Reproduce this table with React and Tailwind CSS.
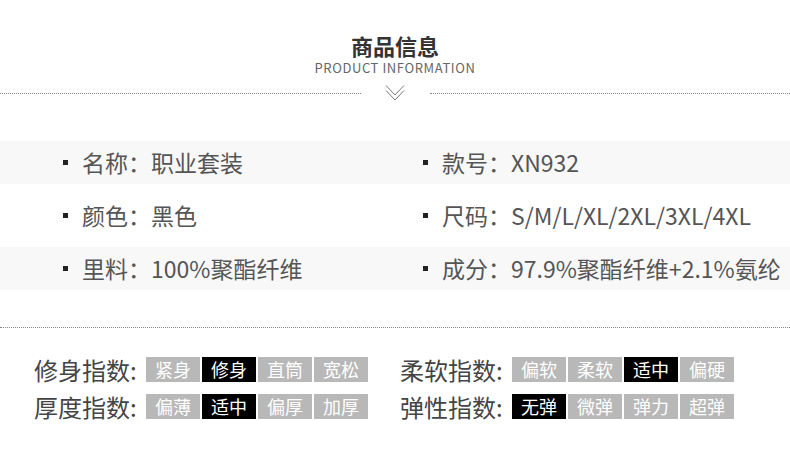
import React from 'react';

const info = [
  { left: ['名称', '职业套装'], right: ['款号', 'XN932'], shaded: true },
  { left: ['颜色', '黑色'], right: ['尺码', 'S/M/L/XL/2XL/3XL/4XL'], shaded: false },
  { left: ['里料', '100%聚酯纤维'], right: ['成分', '97.9%聚酯纤维+2.1%氨纶'], shaded: true },
];

const indexes = [
  [
    { label: '修身指数', options: ['紧身', '修身', '直筒', '宽松'], active: 1 },
    { label: '柔软指数', options: ['偏软', '柔软', '适中', '偏硬'], active: 2 },
  ],
  [
    { label: '厚度指数', options: ['偏薄', '适中', '偏厚', '加厚'], active: 1 },
    { label: '弹性指数', options: ['无弹', '微弹', '弹力', '超弹'], active: 0 },
  ],
];

function Item({ pair }) {
  return (
    <div className="flex items-center">
      <span className="w-[5px] h-[5px] bg-[#222] mr-[14px]" />
      <span>{pair[0]}：{pair[1]}</span>
    </div>
  );
}

function IndexGroup({ group }) {
  return (
    <div className="flex items-center">
      <div className="w-[112px] text-[24px] leading-[25px] text-[#444]">{group.label}:</div>
      <div className="flex gap-[2px]">
        {group.options.map((o, i) => (
          <div
            key={o}
            className={`w-[54px] h-[25px] flex items-center justify-center text-[18px] leading-[25px] text-white ${i === group.active ? 'bg-black' : 'bg-[#b8b8b8]'}`}
          >
            {o}
          </div>
        ))}
      </div>
    </div>
  );
}

export default function App() {
  return (
    <div className="w-[790px] h-[450px] bg-white overflow-hidden font-['Noto_Sans_CJK_SC','Noto_Sans',sans-serif]">
      <div className="pt-[33px] text-center">
        <h1 className="text-[22px] leading-[24px] font-bold text-[#333]">商品信息</h1>
        <p className="mt-[3px] text-[13px] leading-[16px] text-[#666] tracking-[0.6px]">PRODUCT INFORMATION</p>
      </div>

      <div className="mt-[9px] flex items-center h-[16px]">
        <div className="flex-1 border-t border-dotted border-[#888]" />
        <div className="w-[69px] flex justify-center">
          <svg width="20" height="16" viewBox="0 0 20 16" fill="none" stroke="#777" strokeWidth="1">
            <path d="M1 0.5 L10 10 L19 0.5" />
            <path d="M1 5.5 L10 15 L19 5.5" />
          </svg>
        </div>
        <div className="flex-1 border-t border-dotted border-[#888]" />
      </div>

      <div className="mt-[40px] flex flex-col gap-[10px] text-[23px] text-[#555]">
        {info.map((row, i) => (
          <div key={i} className={`h-[43px] grid grid-cols-[360px_1fr] items-center pl-[63px] ${row.shaded ? 'bg-[#f8f8f8]' : ''}`}>
            <Item pair={row.left} />
            <Item pair={row.right} />
          </div>
        ))}
      </div>

      <div className="mt-[37px] border-t border-dotted border-[#888]" />

      <div className="mt-[29px] flex flex-col gap-[12px] pl-[34px]">
        {indexes.map((row, i) => (
          <div key={i} className="flex gap-[32px]">
            {row.map((g) => (
              <IndexGroup key={g.label} group={g} />
            ))}
          </div>
        ))}
      </div>
    </div>
  );
}
